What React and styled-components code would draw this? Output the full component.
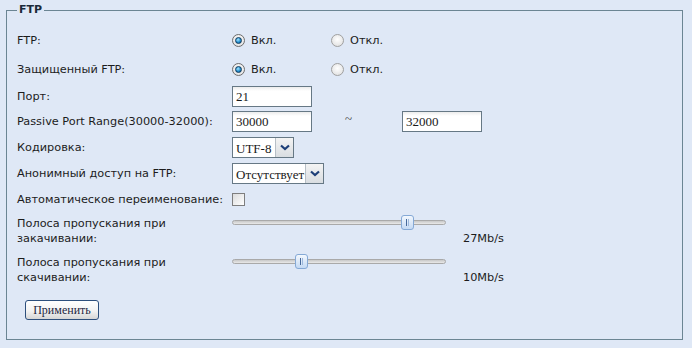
import React from "react";
import styled, { createGlobalStyle } from "styled-components";

const Global = createGlobalStyle`
  html, body {
    margin: 0;
    padding: 0;
    background: #dfe8f6;
  }
  body {
    font-family: "DejaVu Sans", Verdana, sans-serif;
    font-size: 11.3px;
    color: #1c1c1c;
  }
`;

const Page = styled.div`
  width: 692px;
  height: 348px;
  box-sizing: border-box;
  padding: 3px 9px 0 6px;
  background: #dfe8f6;
`;

const Fieldset = styled.fieldset`
  margin: 0;
  height: 337px;
  box-sizing: border-box;
  border: 1px solid #6b8593;
  padding: 9px 10px 19px 10px;
`;

const Legend = styled.legend`
  font-weight: bold;
  font-size: 11px;
  line-height: 14px;
  padding: 0 2px;
  color: #1b2a3a;
`;

const Row = styled.div`
  display: grid;
  grid-template-columns: 215px 1fr;
  align-items: center;
  height: ${(p) => p.$h}px;
`;

const Label = styled.div`
  line-height: 15px;
  max-width: ${(p) => (p.$wrap ? "160px" : "none")};
`;

const Controls = styled.div`
  display: flex;
  align-items: center;
`;

const Option = styled.label`
  display: flex;
  align-items: center;
  gap: 6px;
  width: 99px;
`;

const Radio = styled.span`
  width: 11px;
  height: 11px;
  border-radius: 50%;
  border: 1px solid ${(p) => (p.$on ? "#6d6d6d" : "#a0a0a0")};
  background: radial-gradient(circle at 50% 40%, #ffffff 0%, #e6e6e6 70%, #cfcfcf 100%);
  display: flex;
  align-items: center;
  justify-content: center;
  &::after {
    content: "";
    display: ${(p) => (p.$on ? "block" : "none")};
    width: 7px;
    height: 7px;
    border-radius: 50%;
    box-sizing: border-box;
    border: 1px solid #0e3a5e;
    background: radial-gradient(circle at 40% 35%, #a8e6ff 0%, #2390d0 55%, #0b4a7e 100%);
  }
`;

const TextInput = styled.input`
  box-sizing: border-box;
  width: 80px;
  height: 21px;
  border: 1px solid #667885;
  padding: 2px 3px 0;
  font-family: "Liberation Serif", "Times New Roman", serif;
  font-size: 13px;
  color: #1a1a1a;
  background: linear-gradient(#ececec 0px, #ffffff 4px, #ffffff 100%);
  outline: none;
`;

const Tilde = styled.span`
  width: 90px;
  box-sizing: border-box;
  padding: 0 0 5px 33px;
  font-family: "Liberation Serif", "Times New Roman", serif;
  font-size: 13px;
  color: #333;
`;

const Select = styled.div`
  display: flex;
  height: 21px;
  box-sizing: border-box;
  border: 1px solid #667885;
  background: #fff;
`;

const SelectValue = styled.span`
  width: ${(p) => p.$w}px;
  padding: 2px 0 0 3px;
  box-sizing: border-box;
  font-family: "Liberation Serif", "Times New Roman", serif;
  font-size: 13px;
  line-height: 17px;
  color: #1a1a1a;
  white-space: nowrap;
  overflow: hidden;
`;

const SelectArrow = styled.span`
  width: 17px;
  border-left: 1px solid #b7bfc6;
  background: linear-gradient(#f4f4f4, #d9dde1);
  display: flex;
  align-items: center;
  justify-content: center;
`;

const Checkbox = styled.span`
  width: 11px;
  height: 11px;
  border: 1px solid #7e7e7e;
  background: linear-gradient(135deg, #dcdcdc, #ffffff);
`;

const SliderCell = styled.div`
  display: grid;
  grid-template-columns: 214px auto;
  grid-template-rows: 15px 15px;
  column-gap: 17px;
`;

const Track = styled.div`
  position: relative;
  align-self: center;
  height: 5px;
  margin-top: -2px;
  border-radius: 3px;
  border: 1px solid #a9a9a9;
  background: linear-gradient(#c8c8c8, #e9e9e9);
  box-sizing: border-box;
`;

const Thumb = styled.span`
  position: absolute;
  top: -6px;
  width: 13px;
  height: 15px;
  box-sizing: border-box;
  border: 1px solid #85a9d6;
  border-radius: 3px;
  background: linear-gradient(#f3f8fe, #c4d9f3);
  display: flex;
  justify-content: center;
  &::after {
    content: "";
    width: 1px;
    margin-top: 3px;
    height: 7px;
    border-left: 1px solid #46689a;
    border-right: 1px solid #9db8dc;
  }
`;

const Value = styled.span`
  grid-column: 2;
  grid-row: 2;
  line-height: 15px;
`;

const Button = styled.button`
  margin: 11px 0 0 8px;
  width: 74px;
  height: 20px;
  padding: 0;
  border: 1px solid #2d4f7c;
  border-radius: 3px;
  background: linear-gradient(#ffffff 0%, #f2f2f2 55%, #d6d6d6 100%);
  font-family: "Liberation Serif", "Times New Roman", serif;
  font-size: 12px;
  color: #1c2540;
`;

const Chevron = () => (
  <svg width="10" height="7" viewBox="0 0 10 7">
    <path d="M1 1.5 L5 5 L9 1.5" fill="none" stroke="#1e3f78" strokeWidth="2.2" />
  </svg>
);

const Slider = ({ value, max, label }) => (
  <SliderCell>
    <Track>
      <Thumb style={{ left: `${Math.round((value / max) * 200) - 1}px` }} />
    </Track>
    <Value>{label}</Value>
  </SliderCell>
);

const OnOff = () => (
  <Controls>
    <Option>
      <Radio $on />
      Вкл.
    </Option>
    <Option>
      <Radio />
      Откл.
    </Option>
  </Controls>
);

export default function App() {
  return (
    <Page>
      <Global />
      <Fieldset>
        <Legend>FTP</Legend>
        <Row $h={29}>
          <Label>FTP:</Label>
          <OnOff />
        </Row>
        <Row $h={29}>
          <Label>Защищенный FTP:</Label>
          <OnOff />
        </Row>
        <Row $h={24}>
          <Label>Порт:</Label>
          <Controls>
            <TextInput defaultValue="21" />
          </Controls>
        </Row>
        <Row $h={26}>
          <Label>Passive Port Range(30000-32000):</Label>
          <Controls>
            <TextInput defaultValue="30000" />
            <Tilde>~</Tilde>
            <TextInput defaultValue="32000" />
          </Controls>
        </Row>
        <Row $h={26}>
          <Label>Кодировка:</Label>
          <Controls>
            <Select>
              <SelectValue $w={42}>UTF-8</SelectValue>
              <SelectArrow>
                <Chevron />
              </SelectArrow>
            </Select>
          </Controls>
        </Row>
        <Row $h={26}>
          <Label>Анонимный доступ на FTP:</Label>
          <Controls>
            <Select>
              <SelectValue $w={72}>Отсутствует</SelectValue>
              <SelectArrow>
                <Chevron />
              </SelectArrow>
            </Select>
          </Controls>
        </Row>
        <Row $h={26}>
          <Label>Автоматическое переименование:</Label>
          <Controls>
            <Checkbox />
          </Controls>
        </Row>
        <Row $h={38}>
          <Label $wrap>Полоса пропускания при закачивании:</Label>
          <Slider value={27} max={32} label="27Mb/s" />
        </Row>
        <Row $h={39}>
          <Label $wrap>Полоса пропускания при скачивании:</Label>
          <Slider value={10} max={32} label="10Mb/s" />
        </Row>
        <Button>Применить</Button>
      </Fieldset>
    </Page>
  );
}
